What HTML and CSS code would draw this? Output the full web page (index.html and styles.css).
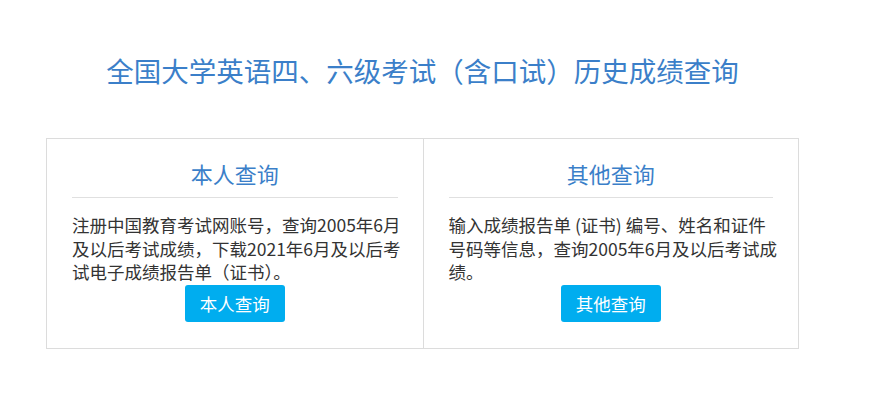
FILE: index.html
```html
<!DOCTYPE html>
<html lang="zh-CN">
<head>
  <meta charset="UTF-8" />
  <title>全国大学英语四、六级考试（含口试）历史成绩查询</title>
  <meta name="viewport" content="width=device-width, initial-scale=1" />
  <link rel="stylesheet" href="styles.css">
</head>
<body>

  <div class="container">
    <h1 class="page-title">全国大学英语四、六级考试（含口试）历史成绩查询</h1>

    <div class="query-box">
      <div class="query-panel">
        <h2 class="panel-title">本人查询</h2>
        <p class="panel-desc">注册中国教育考试网账号，查询2005年6月及以后考试成绩，下载2021年6月及以后考试电子成绩报告单（证书）。</p>
        <div class="panel-action">
          <a class="btn" href="#">本人查询</a>
        </div>
      </div>
      <div class="query-panel">
        <h2 class="panel-title">其他查询</h2>
        <p class="panel-desc">输入成绩报告单 (证书) 编号、姓名和证件号码等信息，查询2005年6月及以后考试成绩。</p>
        <div class="panel-action">
          <a class="btn" href="#">其他查询</a>
        </div>
      </div>
    </div>
  </div>

</body>
</html>
```

FILE: styles.css
```css
* {
  box-sizing: border-box;
}
body {
  font-family: "Noto Sans CJK SC", "Noto Sans", sans-serif;
  margin: 0;
  background: #fff;
  color: #333;
}
.container {
  width: 753px;
  margin-left: 46px;
}
.page-title {
  margin: 50px 0 48px;
  font-size: 27.5px;
  line-height: 40px;
  font-weight: normal;
  text-align: center;
  color: #3b7fc9;
}
.query-box {
  display: grid;
  grid-template-columns: 1fr 1fr;
  border: 1px solid #dcdcdc;
}
.query-panel {
  padding: 19px 17px 26px 25px;
}
.query-panel + .query-panel {
  border-left: 1px solid #dcdcdc;
}
.panel-title {
  margin: 0 8px 0 0;
  padding-bottom: 9px;
  font-size: 22px;
  line-height: 30px;
  font-weight: normal;
  text-align: center;
  color: #3b7fc9;
  border-bottom: 1px solid #e0e0e0;
}
.panel-desc {
  margin: 15px 0 0;
  font-size: 17.5px;
  line-height: 23.5px;
  color: #333;
}
.panel-action {
  text-align: center;
  margin-top: 1px;
  padding-right: 8px;
}
.btn {
  display: inline-block;
  width: 100px;
  height: 37px;
  line-height: 37px;
  background: #00adef;
  color: #fff;
  font-size: 17.5px;
  text-decoration: none;
  border-radius: 3px;
}
```
